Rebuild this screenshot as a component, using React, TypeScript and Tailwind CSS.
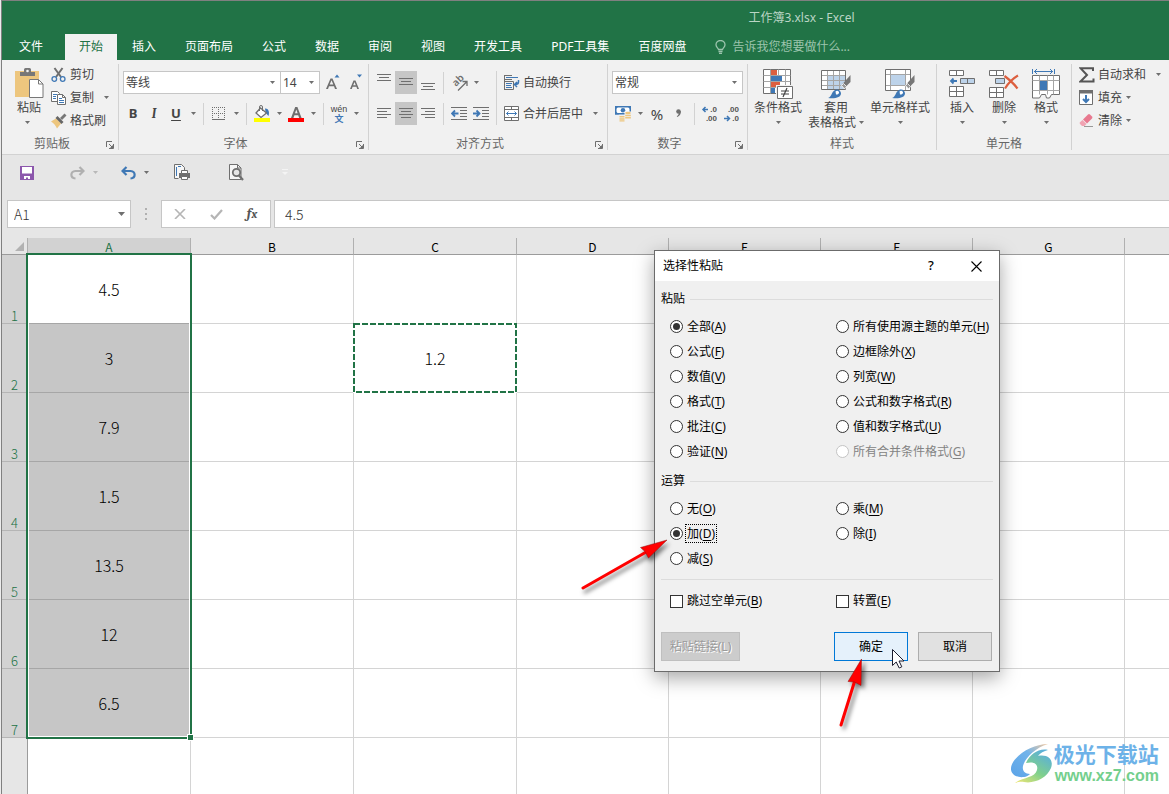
import type { ReactNode } from "react";

const GRAY = "#6f6f6f";
const BLUE = "#3f78b5";
const LIGHT = "#bdd3ea";
const TAN = "#edc67e";

function Icon({ w = 16, h = 16, children }: { w?: number; h?: number; children: ReactNode }) {
  return (
    <svg width={w} height={h} viewBox={`0 0 ${w} ${h}`} fill="none" className="shrink-0" aria-hidden="true">
      {children}
    </svg>
  );
}

function Caret({ color = GRAY }: { color?: string }) {
  return (
    <Icon w={5} h={3}>
      <path d="M0 0H5L2.5 3Z" fill={color} />
    </Icon>
  );
}

function CaretButton({ label, color }: { label: string; color?: string }) {
  return (
    <button aria-label={label} className="flex w-3 items-center justify-center self-stretch">
      <Caret color={color} />
    </button>
  );
}

function Tool({ label, active, wide, children }: { label: string; active?: boolean; wide?: boolean; children: ReactNode }) {
  return (
    <button
      aria-label={label}
      className={`flex h-[23px] shrink-0 items-center justify-center ${wide ? "w-[22px]" : "w-5"} ${active ? "bg-[#c6c6c6]" : ""}`}
    >
      {children}
    </button>
  );
}

function Separator() {
  return <span className="mx-1 h-[22px] w-px shrink-0 bg-[#d2d2d2]" />;
}

function Launcher({ label }: { label: string }) {
  return (
    <button aria-label={label} className="flex w-4 items-center justify-center pt-1">
      <Icon w={8} h={8}>
        <path d="M.5 6V.5H6" stroke={GRAY} />
        <path d="M3 3l3 3M7.500 3v4.500H3" stroke={GRAY} />
        <path d="M7 4v3H4z" fill={GRAY} />
      </Icon>
    </button>
  );
}

function Group({ title, width, launcher, children }: { title: string; width: string; launcher?: boolean; children: ReactNode }) {
  return (
    <section className={`flex h-[86px] shrink-0 flex-col border-r border-[#d2d2d2] ${width}`}>
      <div className="h-[72px]">{children}</div>
      <div className="flex h-[14px]">
        <h2 className="flex-1 text-center leading-4 text-[#666666]">{title}</h2>
        {launcher && <Launcher label={`${title}设置`} />}
      </div>
    </section>
  );
}

function SmallCommand({ icon, label, caret }: { icon: ReactNode; label: string; caret?: string }) {
  return (
    <button className="flex h-[21px] items-center">
      <span className="flex w-[19px] items-center">{icon}</span>
      {label}
      {caret && (
        <span className={caret}>
          <Caret />
        </span>
      )}
    </button>
  );
}

function LargeCommand({ icon, label, second, width }: { icon: ReactNode; label: string; second?: string; width: string }) {
  return (
    <button className={`flex flex-col items-center leading-[15px] whitespace-nowrap ${width}`}>
      <span className="flex h-[33px] items-center">{icon}</span>
      <span>{label}</span>
      <span className="flex h-[15px] items-center gap-[3px]">
        {second}
        <Caret />
      </span>
    </button>
  );
}

function Combo({ label, value, width }: { label: string; value: string; width: string }) {
  return (
    <span className={`flex h-[23px] items-center border border-[#c6c6c6] bg-white pr-[5px] pl-[2px] ${width}`}>
      <select aria-label={label} className="min-w-0 flex-1 appearance-none bg-transparent text-[#444444] outline-none">
        <option>{value}</option>
      </select>
      <Caret />
    </span>
  );
}

/* ---------- ribbon drawings ---------- */

const PasteIcon = () => (
  <Icon w={29} h={31}>
    <path d="M0 3h24v26H0z" fill={TAN} />
    <path d="M5 8V4h4V1.500A1.500 1.500 0 0 1 10.500 0h4A1.500 1.500 0 0 1 16 1.500V4h4v4z" fill="#777" />
    <circle cx="12.500" cy="3" r="1.300" fill="#f1f1f1" />
    <path d="M14 11h10l5 5v14H14z" fill="#f1f1f1" />
    <path d="M14.500 11.500h9l4.500 4.500v13.500H14.500z" fill="#fff" stroke="#777" />
    <path d="M23.500 11.500V16H28" stroke="#777" />
  </Icon>
);

const CutIcon = () => (
  <Icon>
    <path d="M3.500 1l6.500 9M11.500 1L5 10" stroke={GRAY} strokeWidth="2" />
    <circle cx="3.300" cy="12" r="2.300" stroke={BLUE} strokeWidth="1.300" />
    <circle cx="11.700" cy="12" r="2.300" stroke={BLUE} strokeWidth="1.300" />
  </Icon>
);

const CopyIcon = () => (
  <Icon>
    <path d="M.5 1.500h6l2 2v8h-8z" fill="#fff" stroke={GRAY} />
    <path d="M2 4.500h4M2 6.500h3M2 8.500h3" stroke={BLUE} />
    <path d="M6.500 4.500h5l3 3v7h-8z" fill="#fff" stroke={GRAY} />
    <path d="M8 8.500h3M8 10.500h5M8 12.500h5" stroke={BLUE} />
    <path d="M11.500 4.500v3h3" stroke={GRAY} />
  </Icon>
);

const BrushIcon = () => (
  <Icon>
    <path d="M0 8.500l5-3 5 5-4 5c-1-2.500-3-5-6-7z" fill={TAN} />
    <path d="M4.500 5l2-2 6 6-2 2z" fill="#666" />
    <path d="M9 5l4.500-4.500 2 2L11 7z" fill="#777" />
  </Icon>
);

const GrowFont = () => (
  <Icon w={18} h={18}>
    <path d="M0 15L4.500 4.500H6.500L11 15H9L8 12.200H3L2 15zM3.700 10.500h3.600L5.500 6.200z" fill={GRAY} />
    <path d="M8.500 3.500l2.500-3 2.500 3z" fill={BLUE} />
  </Icon>
);

const ShrinkFont = () => (
  <Icon w={16} h={18}>
    <path d="M2 15l3.500-8.500h2L11 15H9.200l-.8-2.200H4.600L3.800 15zM5.200 11.300h2.600L6.500 8z" fill={GRAY} />
    <path d="M9 .5h5l-2.500 3z" fill={BLUE} />
  </Icon>
);

const BordersIcon = () => (
  <Icon w={14} h={14}>
    <path d="M.5 0v12M6.500 0v12M12.500 0v12M0 .5h13M0 6.500h13" stroke={GRAY} strokeDasharray="1 1" />
    <path d="M0 12.500h13" stroke={GRAY} />
  </Icon>
);

const FillIcon = () => (
  <Icon w={17} h={18}>
    <path d="M11 3.500c3-.5 5 3 3.500 7.500-1.500-1-2-3-3-4z" fill={BLUE} />
    <path d="M6.500 3l6 5-5.500 4.500-5-4.500z" fill="#fff" stroke={GRAY} strokeWidth="1.300" />
    <path d="M5.500 6V2a1.500 1.500 0 0 1 3 0v4" stroke={GRAY} />
    <path d="M0 13h16v4H0z" fill="#ffff00" />
  </Icon>
);

const FontColorIcon = () => (
  <Icon w={17} h={18}>
    <path d="M3 13L7.200 2h2.200L13.600 13h-2.400l-1-2.800H6.400L5.400 13zM7 8.300h2.600L8.300 4.500z" fill={GRAY} />
    <path d="M0 13h16v4H0z" fill="#ff0000" />
  </Icon>
);

function LinesIcon({ rows }: { rows: [number, number, number][] }) {
  return (
    <Icon w={14} h={17}>
      {rows.map(([x, y, w]) => (
        <path key={y} d={`M${x} ${y}.5h${w}`} stroke={GRAY} />
      ))}
    </Icon>
  );
}

const OrientationIcon = () => (
  <svg width="20" height="20" viewBox="0 0 20 20" className="shrink-0" aria-hidden="true">
    <text x="0" y="0" transform="translate(7 14) rotate(-45)" fontSize="10" fontWeight="600" fill={GRAY}>
      ab
    </text>
    <path d="M9 17.500L17.500 9M13.500 8.500h4.500V13" fill="none" stroke={GRAY} strokeWidth="1.300" />
  </svg>
);

function IndentIcon({ flip }: { flip?: boolean }) {
  return (
    <Icon w={16} h={14}>
      <path d="M0 .5h16M9 3.500h7M9 6.500h7M9 9.500h7M0 12.500h16" stroke={GRAY} />
      <path d={flip ? "M0 6.500h6M3.500 3.500l3 3-3 3" : "M1.500 6.500h6M4 3.500l-3 3 3 3"} stroke={BLUE} strokeWidth="1.800" />
    </Icon>
  );
}

const WrapIcon = () => (
  <Icon>
    <path d="M.5 0v15M0 .5h8M0 4.500h8M.5 6.500h9v8H.5" stroke={GRAY} />
    <path d="M2 2.500h12" stroke={BLUE} />
    <path d="M2 8.500h6M2 10.500h5M2 12.500h6" stroke={BLUE} />
    <path d="M14.500 5v2c0 2-1 2.500-3.500 2.500M13 7l-2.500 2.500L13 12" stroke={BLUE} strokeWidth="1.500" />
  </Icon>
);

const MergeIcon = () => (
  <Icon>
    <path d="M.5.5h14v14H.5zM.5 3.500h14M.5 11.500h14M7.500.5v3M7.500 11.500v3" fill="#fff" stroke={GRAY} />
    <path d="M2.500 7.500h10M4.500 5.500l-2 2 2 2M10.500 5.500l2 2-2 2" stroke={BLUE} />
  </Icon>
);

const CurrencyIcon = () => (
  <Icon w={17} h={17}>
    <path d="M.75 1.750h14.500v7H.75z" fill="#fff" stroke={BLUE} strokeWidth="1.500" />
    <path d="M0 1h4L0 5zM16 1h-4l4 4zM0 9.500h4l-4-4z" fill={BLUE} />
    <circle cx="8" cy="5.250" r="2.300" fill={BLUE} />
    <path d="M9.500 6.500H17V16H9.500z" fill="#f1f1f1" />
    <ellipse cx="13" cy="8" rx="2.800" ry="1.300" fill={TAN} />
    <path d="M10.200 9.700h5.600v1.500h-5.600zM10.200 12h5.600v1.500h-5.600zM4.500 11h5v1.500h-5zM4.500 13.200h5v1.500h-5zM4.500 15.300h5v1.200h-5z" fill={TAN} />
  </Icon>
);

function DecimalIcon({ decrease }: { decrease?: boolean }) {
  return (
    <svg
      width="18"
      height="20"
      viewBox="0 0 18 20"
      fill="#555"
      fontSize="8"
      fontWeight="700"
      className="shrink-0 [font-family:'Liberation_Sans',sans-serif]"
      aria-hidden="true"
    >
      <text x="16" y="8" textAnchor="end">{decrease ? ".00" : ".0"}</text>
      <text x="16" y="17" textAnchor="end">{decrease ? ".0" : ".00"}</text>
      <path
        d={decrease ? "M1 14.500h5M4 12l2.500 2.500L4 17" : "M2 5.500h5M4.500 3L2 5.500 4.500 8"}
        fill="none"
        stroke={BLUE}
        strokeWidth="1.500"
      />
    </svg>
  );
}

const ConditionalIcon = () => (
  <Icon w={30} h={30}>
    <path d="M.5.5h27v24H.5z" fill="#fff" stroke={GRAY} />
    <path d="M7.500.5v24M15.500.5v24M22.500.5v24M.5 6.500h27M.5 12.500h27M.5 18.500h27" stroke="#a5a5a5" />
    <path d="M8 1h6v5H8zM8 13h9v5H8z" fill="#dc5f3f" />
    <path d="M8 7h11v5H8zM8 19h4v5H8z" fill={BLUE} />
    <path d="M13 16h17v14H13z" fill="#f1f1f1" />
    <path d="M14.500 17.500h15v12h-15z" fill="#fff" stroke={GRAY} />
    <path d="M18 22h8M18 25h8M24 19l-4 9" stroke="#444" strokeWidth="1.200" />
  </Icon>
);

const PaintBrush = () => (
  <>
    <path d="M29.500 6v7l-5 5-3-3z" fill="#777" />
    <path d="M20.500 16.500l2-2 3 3-2 2.500z" fill="#999" stroke="#fff" strokeWidth=".8" />
    <path d="M7 29c4-1 3-6 7-8 3-1.500 6 .5 6 3.500 0 4-6 5.500-13 4.500z" fill={BLUE} />
    <path d="M14.500 22.500c1.500-1.800 4-.5 3.500 1.500-.8 1.500-2 1.700-3 1.500z" fill="#fff" />
  </>
);

const TableFormatIcon = () => (
  <Icon w={30} h={30}>
    <path d="M.5 1.500h24v19H.5z" fill="#fff" />
    <path d="M6 6h18v15H6z" fill={LIGHT} />
    <path d="M6.500 1.500v19M12.500 1.500v19M18.500 1.500v19M.5 6.500h24M.5 11.500h24M.5 16.500h24" stroke="#a5a5a5" />
    <path d="M.5 1.500h24v19H.5z" stroke={GRAY} />
    <PaintBrush />
  </Icon>
);

const CellStyleIcon = () => (
  <Icon w={30} h={30}>
    <path d="M.5.5h25v21H.5z" fill="#fff" />
    <path d="M5.500.5v21M20.500.5v21M.5 5.500h25M.5 16.500h25" stroke="#a5a5a5" />
    <path d="M6 6h14v10H6z" fill={LIGHT} />
    <path d="M.5.5h25v21H.5z" stroke={GRAY} />
    <PaintBrush />
  </Icon>
);

const InsertIcon = () => (
  <Icon w={27} h={30}>
    <path d="M.5 1.500h14v5H.5zM7.500 1.500v5M.5 17.500h14v10H.5zM7.500 17.500v10M.5 22.500h14" fill="#fff" stroke={GRAY} />
    <path d="M11.500 9.500h14v5h-14zM18.500 9.500v5" fill={LIGHT} stroke={GRAY} />
    <path d="M2 12h6M4.500 9.500L2 12l2.500 2.500" stroke={BLUE} strokeWidth="1.800" />
  </Icon>
);

const DeleteIcon = () => (
  <Icon w={30} h={30}>
    <path d="M.5 1.500h14v5H.5zM7.500 1.500v5M.5 18.500h14v10H.5zM7.500 18.500v10M.5 23.500h14" fill="#fff" stroke={GRAY} />
    <path d="M6.500 9.500h9v5h-9z" fill={LIGHT} stroke={GRAY} />
    <path d="M15.500 7c4 3 9 7 13 12.500M29 6.500c-5 3-10 8-13 13" stroke="#dc5f3f" strokeWidth="2.200" />
  </Icon>
);

const FormatIcon = () => (
  <Icon w={28} h={32}>
    <path d="M.5 1v5M22.500 1v5M2 3.500h19M5 1L2.500 3.500 5 6M18 1l2.500 2.500L18 6" stroke={BLUE} />
    <path d="M.5 7.500h27v19h-8l-2 3.500h-3l-1-3.500h-4l-2 3.500h-7z" fill="#fff" stroke={GRAY} />
    <path d="M7.500 7.500v19M15.500 7.500v19M21.500 7.500v19M.5 12.500h27M.5 22.500h27" stroke="#a5a5a5" />
    <path d="M8 13h7v9H8z" fill={BLUE} />
  </Icon>
);

const SumIcon = () => (
  <Icon>
    <path d="M14 4V1.200H1.500L8 8l-6.500 6.500H14.500V11.500" stroke="#555" strokeWidth="2" />
  </Icon>
);

const FillDownIcon = () => (
  <Icon>
    <path d="M.5.5h13v14H.5z" fill="#fff" stroke={GRAY} />
    <path d="M0 0h14v3.500H0z" fill={GRAY} />
    <path d="M7 5v7M4 9l3 3 3-3" stroke={BLUE} strokeWidth="2" />
  </Icon>
);

const EraserIcon = () => (
  <Icon>
    <path d="M9 1.500a1.500 1.500 0 0 1 2 0l2 2a1.500 1.500 0 0 1 0 2L8 10.500 4 6.500z" fill="#e8798f" />
    <path d="M3.500 7l4 4-2 2H3L1 11c-.5-.7-.4-1.300 0-1.700z" fill="#f0a3b2" />
    <path d="M5 13.500h9" stroke="#999" />
  </Icon>
);

/* ---------- data ---------- */

const tabs = ["开始", "插入", "页面布局", "公式", "数据", "审阅", "视图", "开发工具", "PDF工具集", "百度网盘"];
const columns = ["A", "B", "C", "D", "E", "F", "G", ""];
const columnWidths = ["w-[163px]", "w-[163px]", "w-[163px]", "w-[152px]", "w-[152px]", "w-[152px]", "w-[152px]", ""];
const values = ["4.5", "3", "7.9", "1.5", "13.5", "12", "6.5", ""];

type Choice = { text: string; mnemonic: string; checked?: boolean; disabled?: boolean; focused?: boolean };

const pasteChoices: Choice[] = [
  { text: "全部", mnemonic: "A", checked: true },
  { text: "所有使用源主题的单元", mnemonic: "H" },
  { text: "公式", mnemonic: "F" },
  { text: "边框除外", mnemonic: "X" },
  { text: "数值", mnemonic: "V" },
  { text: "列宽", mnemonic: "W" },
  { text: "格式", mnemonic: "T" },
  { text: "公式和数字格式", mnemonic: "R" },
  { text: "批注", mnemonic: "C" },
  { text: "值和数字格式", mnemonic: "U" },
  { text: "验证", mnemonic: "N" },
  { text: "所有合并条件格式", mnemonic: "G", disabled: true },
];

const operationChoices: Choice[] = [
  { text: "无", mnemonic: "O" },
  { text: "乘", mnemonic: "M" },
  { text: "加", mnemonic: "D", checked: true, focused: true },
  { text: "除", mnemonic: "I" },
  { text: "减", mnemonic: "S" },
];

/* ---------- window parts ---------- */

function TitleBar() {
  return (
    <header className="border-t border-[#808080] bg-[#217346] text-white">
      <div className="flex h-[33px] items-center justify-center pl-[432px] text-[#bad5c5]">工作簿3.xlsx - Excel</div>
      <nav className="flex h-[26px] gap-px whitespace-nowrap">
        <button className="w-[62px] shrink-0 pr-1">文件</button>
        {tabs.map((tab, i) => (
          <button key={tab} className={`shrink-0 px-[14px] ${i === 0 ? "bg-[#f1f1f1] text-[#217346]" : ""}`}>
            {tab}
          </button>
        ))}
        <label className="flex flex-1 items-center gap-[6px] pl-[14px]">
          <Icon w={11} h={14}>
            <path d="M3.500 9.500C3 8 1 7 1 4.750a4.500 4.250 0 0 1 9 0C10 7 8 8 7.500 9.500zM3.500 11.500h4M4 13.300h3" stroke="#9cc4ad" strokeWidth="1.300" />
          </Icon>
          <input
            aria-label="告诉我您想要做什么"
            placeholder="告诉我您想要做什么..."
            className="min-w-0 flex-1 bg-transparent outline-none placeholder:text-[#9cc4ad]"
          />
        </label>
      </nav>
    </header>
  );
}

function Ribbon() {
  return (
    <div className="flex h-[95px] overflow-hidden border-b border-[#d2d2d2] bg-[#f1f1f1] pt-1 whitespace-nowrap text-[#444444]">
      <Group title="剪贴板" width="w-[117px]" launcher>
        <div className="flex gap-2 pl-[13px]">
          <button className="flex w-7 flex-col gap-px pt-[4px] leading-[15px]">
            <PasteIcon />
            <span>粘贴</span>
            <span className="flex h-3 w-6 items-center justify-center">
              <Caret />
            </span>
          </button>
          <div className="flex flex-col items-start gap-[2px]">
            <SmallCommand icon={<CutIcon />} label="剪切" />
            <SmallCommand icon={<CopyIcon />} label="复制" caret="ml-[10px]" />
            <SmallCommand icon={<BrushIcon />} label="格式刷" />
          </div>
        </div>
      </Group>

      <Group title="字体" width="w-[250px]" launcher>
        <div className="flex flex-col gap-2 pt-[7px] pl-1">
          <div className="flex">
            <Combo label="字体" value="等线" width="w-[158px]" />
            <Combo label="字号" value="14" width="-ml-px w-[40px]" />
            <div className="flex pl-1">
              <Tool label="增大字号" wide><GrowFont /></Tool>
              <Tool label="减小字号"><ShrinkFont /></Tool>
            </div>
          </div>
          <div className="flex items-center">
            <Tool label="加粗"><b className="text-[13px]">B</b></Tool>
            <Tool label="倾斜" wide><i className="font-serif text-[13px] font-bold">I</i></Tool>
            <Tool label="下划线" wide><b className="text-[13px] underline underline-offset-2">U</b></Tool>
            <CaretButton label="下划线选项" />
            <Separator />
            <Tool label="边框" wide><BordersIcon /></Tool>
            <CaretButton label="边框选项" />
            <Separator />
            <Tool label="填充颜色" wide><FillIcon /></Tool>
            <CaretButton label="填充颜色选项" />
            <Tool label="字体颜色" wide><FontColorIcon /></Tool>
            <CaretButton label="字体颜色选项" />
            <Separator />
            <Tool label="拼音" wide>
              <span className="flex flex-col items-center text-[9px] leading-[10px] [font-family:'Liberation_Sans','Noto_Sans_CJK_SC',sans-serif]">
                wén
                <span className="font-bold text-[#3f78b5]">文</span>
              </span>
            </Tool>
            <CaretButton label="拼音选项" />
          </div>
        </div>
      </Group>

      <Group title="对齐方式" width="w-[239px]" launcher>
        <div className="flex items-start pt-[7px] pl-1">
          <div className="flex flex-col gap-2">
            <div className="flex items-center">
              <Tool label="顶端对齐" wide><LinesIcon rows={[[0, 0, 14], [2, 3, 10], [0, 6, 14]]} /></Tool>
              <Tool label="垂直居中" wide active><LinesIcon rows={[[0, 4, 14], [2, 7, 10], [0, 10, 14]]} /></Tool>
              <Tool label="底端对齐" wide><LinesIcon rows={[[0, 9, 14], [2, 12, 10], [0, 15, 14]]} /></Tool>
              <Separator />
              <Tool label="方向" wide><OrientationIcon /></Tool>
              <CaretButton label="方向选项" />
            </div>
            <div className="flex items-center">
              <Tool label="左对齐" wide><LinesIcon rows={[[0, 3, 14], [0, 6, 10], [0, 9, 14], [0, 12, 10]]} /></Tool>
              <Tool label="居中" wide active><LinesIcon rows={[[0, 3, 14], [2, 6, 10], [0, 9, 14], [2, 12, 10]]} /></Tool>
              <Tool label="右对齐" wide><LinesIcon rows={[[0, 3, 14], [4, 6, 10], [0, 9, 14], [4, 12, 10]]} /></Tool>
              <Separator />
              <Tool label="减少缩进量" wide><IndentIcon /></Tool>
              <Tool label="增加缩进量" wide><IndentIcon flip /></Tool>
            </div>
          </div>
          <span className="mx-1 h-[54px] w-px bg-[#d2d2d2]" />
          <div className="flex flex-col items-start gap-[10px] pt-px pl-[3px]">
            <SmallCommand icon={<WrapIcon />} label="自动换行" />
            <SmallCommand icon={<MergeIcon />} label="合并后居中" caret="ml-[10px]" />
          </div>
        </div>
      </Group>

      <Group title="数字" width="w-[140px]" launcher>
        <div className="flex flex-col gap-2 pt-[7px] pl-1">
          <Combo label="数字格式" value="常规" width="w-[131px]" />
          <div className="flex items-center">
            <Tool label="会计数字格式" wide><CurrencyIcon /></Tool>
            <CaretButton label="会计数字格式选项" />
            <Tool label="百分比样式" wide><span className="text-[15px]">%</span></Tool>
            <Tool label="千位分隔样式" wide>
              <Icon w={8} h={12}>
                <circle cx="3.500" cy="3.500" r="2.300" fill={GRAY} />
                <path d="M5.800 3c.3 3-1 5-3.500 6l-.5-.8C3.300 7.500 4 6 3.800 4z" fill={GRAY} />
              </Icon>
            </Tool>
            <Separator />
            <Tool label="增加小数位数" wide><DecimalIcon /></Tool>
            <Tool label="减少小数位数" wide><DecimalIcon decrease /></Tool>
          </div>
        </div>
      </Group>

      <Group title="样式" width="w-[189px]">
        <div className="flex gap-px pt-[3px] pl-[3px]">
          <LargeCommand icon={<ConditionalIcon />} label="条件格式" width="w-[54px]" />
          <LargeCommand icon={<TableFormatIcon />} label="套用" second="表格格式" width="w-[60px]" />
          <LargeCommand icon={<CellStyleIcon />} label="单元格样式" width="w-[66px]" />
        </div>
      </Group>

      <Group title="单元格" width="w-[135px]">
        <div className="flex pt-[3px] pl-1">
          <LargeCommand icon={<InsertIcon />} label="插入" width="w-[42px]" />
          <LargeCommand icon={<DeleteIcon />} label="删除" width="w-[42px]" />
          <LargeCommand icon={<FormatIcon />} label="格式" width="w-[42px]" />
        </div>
      </Group>

      <section className="flex flex-col items-start gap-[2px] pl-[7px]">
        <SmallCommand icon={<SumIcon />} label="自动求和" caret="ml-[10px]" />
        <SmallCommand icon={<FillDownIcon />} label="填充" caret="ml-1" />
        <SmallCommand icon={<EraserIcon />} label="清除" caret="ml-1" />
      </section>
    </div>
  );
}

function QuickAccess() {
  return (
    <div className="flex h-[35px] items-center pl-[17px]">
      <button aria-label="保存" className="flex w-4 justify-center">
        <Icon w={14} h={14}>
          <path d="M0 0h14v14H0z" fill="#8c57ac" />
          <path d="M2 1h10v6.500H2zM4 10h6v3H8v-1.500H6V13H4z" fill="#fff" />
        </Icon>
      </button>
      <button aria-label="恢复" className="ml-[34px] flex w-4 justify-center">
        <Icon w={15} h={14}>
          <path d="M13 5H5.500C0 5.500 0 12 5.500 12.500M9.500 1l4 4-4 4" stroke="#b0b0b0" strokeWidth="2.200" />
        </Icon>
      </button>
      <span className="ml-1"><CaretButton label="恢复选项" color="#b8b8b8" /></span>
      <button aria-label="撤消" className="ml-[19px] flex w-4 justify-center">
        <Icon w={15} h={14}>
          <path d="M2 5h7.500c5.500.5 5.500 7 0 7.500M5.500 1l-4 4 4 4" stroke={BLUE} strokeWidth="2.200" />
        </Icon>
      </button>
      <span className="ml-1"><CaretButton label="撤消选项" /></span>
      <button aria-label="快速打印" className="ml-[22px] flex w-4 justify-center">
        <Icon w={16} h={17}>
          <path d="M4.500 14.500h-4V.5h7l3 3V6" fill="#f6f6f6" stroke={GRAY} />
          <path d="M2.500 3v9M4 2.500h3" stroke={BLUE} />
          <path d="M5 9h11v5H5z" fill={GRAY} />
          <path d="M7.500 6.500h6v3h-6zM7.500 12.500h6v3h-6z" fill="#fff" stroke={GRAY} />
        </Icon>
      </button>
      <button aria-label="打印预览" className="ml-[38px] flex w-4 justify-center">
        <Icon w={15} h={17}>
          <path d="M.5.5h8l3.500 3.500v11.500H.5z" fill="#f6f6f6" stroke={GRAY} />
          <path d="M8.500.5V4H12" stroke={GRAY} />
          <circle cx="7.500" cy="8.500" r="3.700" fill="#e6e6e6" stroke={GRAY} strokeWidth="1.800" />
          <path d="M10 11.500l4 4.500" stroke={GRAY} strokeWidth="2.200" />
        </Icon>
      </button>
      <button aria-label="自定义快速访问工具栏" className="ml-[38px]">
        <Icon w={6} h={7}>
          <path d="M0 .5h6" stroke="#f4f4f4" />
          <path d="M0 3h6L3 6z" fill="#f4f4f4" />
        </Icon>
      </button>
    </div>
  );
}

function FormulaBar() {
  return (
    <div className="mt-[10px] flex h-7 pl-[5px] text-sm font-light text-[#333333]">
      <div className="flex w-[124px] shrink-0 items-center border border-[#c6c6c6] bg-white pr-[5px] pl-[6px]">
        <input aria-label="名称框" defaultValue="A1" className="min-w-0 flex-1 outline-none [font-family:'Noto_Sans_CJK_SC',sans-serif]" />
        <Icon w={7} h={4}>
          <path d="M0 0h7L3.500 4z" fill={GRAY} />
        </Icon>
      </div>
      <span className="flex w-[30px] shrink-0 items-center justify-center">
        <Icon w={2} h={12}>
          <path d="M0 0h2v2H0zM0 5h2v2H0zM0 10h2v2H0z" fill="#b0b0b0" />
        </Icon>
      </span>
      <div className="flex w-[110px] shrink-0 border border-[#c6c6c6] bg-white">
        <button aria-label="取消" className="flex flex-1 items-center justify-center">
          <Icon w={12} h={10}><path d="M1 0l10 10M11 0L1 10" stroke="#b5b5b5" strokeWidth="1.600" /></Icon>
        </button>
        <button aria-label="输入" className="flex flex-1 items-center justify-center">
          <Icon w={13} h={11}><path d="M1 6l3.500 3.500L12 1" stroke="#b5b5b5" strokeWidth="2.200" /></Icon>
        </button>
        <button aria-label="插入函数" className="flex-1 font-serif text-sm font-bold text-[#555555] italic">
          f<span className="text-xs">x</span>
        </button>
      </div>
      <input
        aria-label="编辑栏"
        defaultValue="4.5"
        className="ml-[3px] min-w-0 flex-1 border border-r-0 border-[#c6c6c6] bg-white pl-[10px] outline-none [font-family:'Noto_Sans_CJK_SC',sans-serif]"
      />
    </div>
  );
}

function Sheet() {
  return (
    <div className="relative mt-[10px] min-h-0 flex-1 overflow-hidden [font-family:'Noto_Sans_CJK_SC',sans-serif]">
      <table className="w-full table-fixed border-separate border-spacing-0 bg-white">
        <colgroup>
          <col className="w-[26px]" />
          {columnWidths.map((w, i) => (
            <col key={i} className={w} />
          ))}
        </colgroup>
        <thead>
          <tr className="h-[17px]">
            <th className="border-r border-b border-r-[#b0b0b0] border-b-[#9b9b9b] bg-[#e6e6e6] p-0">
              <svg width="9" height="9" viewBox="0 0 9 9" className="mr-[3px] ml-auto" aria-hidden="true">
                <path d="M9 0v9H0z" fill="#b2b2b2" />
              </svg>
            </th>
            {columns.map((c, i) => (
              <th
                key={i}
                className={`border-r border-b border-r-[#b0b0b0] border-b-[#9b9b9b] p-0 align-bottom text-xs leading-[14px] font-normal last:border-r-0 ${i === 0 ? "bg-[#d2d2d2] text-[#217346]" : "bg-[#e6e6e6] text-black"}`}
              >
                {c}
              </th>
            ))}
          </tr>
        </thead>
        <tbody>
          {values.map((v, r) => (
            <tr key={r} className="h-[69px]">
              <th
                className={`border-r border-b border-r-[#9b9b9b] border-b-[#b5b5b5] p-0 text-center align-bottom text-[13px] leading-[14px] font-light ${r < 7 ? "bg-[#d2d2d2] text-[#217346]" : "bg-[#e6e6e6]"}`}
              >
                {r < 7 ? r + 1 : ""}
              </th>
              {columns.map((_, c) => (
                <td
                  key={c}
                  className={`border-r border-b border-r-[#d4d4d4] p-0 text-center align-middle text-base font-light text-black last:border-r-0 ${c === 0 && r > 0 && r < 7 ? "bg-[#c6c6c6]" : ""} ${c === 0 && r < 7 ? "border-b-[#a6a6a6]" : "border-b-[#d4d4d4]"}`}
                >
                  {c === 0 ? v : c === 2 && r === 1 ? "1.2" : ""}
                </td>
              ))}
            </tr>
          ))}
        </tbody>
      </table>
      <div className="absolute top-[15px] left-[24px] h-[486px] w-[166px] border-2 border-[#217346]">
        <div className="h-full border border-white" />
        <span className="absolute -right-[4px] -bottom-[4px] size-[7px] border border-white bg-[#217346]" />
      </div>
      <svg className="absolute top-[85px] left-[351px]" width="164" height="70" viewBox="0 0 164 70" fill="none" aria-hidden="true">
        <rect x="1" y="1" width="162" height="68" stroke="#fff" strokeWidth="2" />
        <rect x="1" y="1" width="162" height="68" stroke="#217346" strokeWidth="2" strokeDasharray="6 2" />
      </svg>
    </div>
  );
}

function RadioChoice({ group, choice }: { group: string; choice: Choice }) {
  return (
    <label className={`flex h-[25px] items-center gap-[3px] whitespace-nowrap ${choice.disabled ? "text-[#838383]" : ""}`}>
      <input
        type="radio"
        name={group}
        defaultChecked={choice.checked}
        disabled={choice.disabled}
        className="grid size-[13px] shrink-0 appearance-none place-items-center rounded-full border border-[#333333] bg-white before:size-[7px] before:rounded-full checked:before:bg-[#333333] disabled:border-[#c4c4c4]"
      />
      <span className={`px-px leading-[17px] ${choice.focused ? "outline-1 outline-black outline-dotted" : ""}`}>
        {choice.text}(<u className="underline-offset-2">{choice.mnemonic}</u>)
      </span>
    </label>
  );
}

function CheckChoice({ text, mnemonic }: { text: string; mnemonic: string }) {
  return (
    <label className="flex items-center gap-1 whitespace-nowrap">
      <input type="checkbox" className="size-[13px] shrink-0 appearance-none border border-[#333333] bg-white" />
      <span>
        {text}(<u className="underline-offset-2">{mnemonic}</u>)
      </span>
    </label>
  );
}

function SectionTitle({ children }: { children: ReactNode }) {
  return (
    <legend className="flex h-5 w-full items-center gap-[5px]">
      {children}
      <span className="h-px flex-1 bg-[#dcdcdc]" />
    </legend>
  );
}

function PasteSpecialDialog() {
  return (
    <div
      role="dialog"
      aria-label="选择性粘贴"
      className="absolute top-[250px] left-[654px] w-[346px] border border-[#6b6b6b] bg-[#f0f0f0] text-black shadow-[0_6px_18px_rgba(0,0,0,0.35)]"
    >
      <div className="flex h-[30px] items-center bg-white pr-[15px] pl-2">
        <h1 className="flex-1">选择性粘贴</h1>
        <button aria-label="帮助" className="w-[30px] text-[13px] font-medium">?</button>
        <button aria-label="关闭" className="ml-[22px] flex w-4 justify-center">
          <Icon w={11} h={11}><path d="M.5.5l10 10M10.500.5l-10 10" stroke="#000" strokeWidth="1.100" /></Icon>
        </button>
      </div>
      <form className="px-[6px] pt-2 pb-[10px]">
        <fieldset>
          <SectionTitle>粘贴</SectionTitle>
          <div className="grid grid-cols-[166px_1fr] pt-[5px] pl-[9px]">
            {pasteChoices.map((c) => (
              <RadioChoice key={c.mnemonic} group="paste" choice={c} />
            ))}
          </div>
        </fieldset>
        <fieldset className="mt-[7px]">
          <SectionTitle>运算</SectionTitle>
          <div className="grid grid-cols-[166px_1fr] pt-[5px] pl-[9px]">
            {operationChoices.map((c) => (
              <RadioChoice key={c.mnemonic} group="operation" choice={c} />
            ))}
          </div>
        </fieldset>
        <hr className="mt-2 border-[#dcdcdc]" />
        <div className="mt-3 grid grid-cols-[166px_1fr] pl-[9px] leading-[18px]">
          <CheckChoice text="跳过空单元" mnemonic="B" />
          <CheckChoice text="转置" mnemonic="E" />
        </div>
        <div className="mt-[22px] flex h-[29px] gap-[10px] pr-px">
          <button type="button" disabled className="mr-auto w-[79px] border border-[#bfbfbf] bg-[#cccccc] text-[#9a9a9a] [text-shadow:1px_1px_0_#ffffff]">
            粘贴链接(L)
          </button>
          <button type="button" className="w-[74px] border border-[#0078d7] bg-[#e5f1fb]">确定</button>
          <button type="button" className="w-[74px] border border-[#adadad] bg-[#e1e1e1]">取消</button>
        </div>
      </form>
    </div>
  );
}

function Annotations() {
  return (
    <>
      <svg className="pointer-events-none absolute top-[530px] left-[575px] drop-shadow-[2px_4px_2px_rgba(0,0,0,0.5)]" width="100" height="70" viewBox="575 530 100 70" aria-hidden="true">
        <path d="M583 588L648 551" stroke="#f00" strokeWidth="3" strokeLinecap="round" />
        <path d="M667 540L640.500 547.500 645 551.500 648.500 558z" fill="#f00" stroke="#8a1010" strokeWidth=".5" />
      </svg>
      <svg className="pointer-events-none absolute top-[645px] left-[830px] drop-shadow-[3px_3px_2px_rgba(0,0,0,0.5)]" width="50" height="90" viewBox="830 645 50 90" aria-hidden="true">
        <path d="M841 725L855 680" stroke="#f00" strokeWidth="3" strokeLinecap="round" />
        <path d="M861.500 659L848 681.500 854.500 682 861 685.500z" fill="#f00" stroke="#8a1010" strokeWidth=".5" />
      </svg>
      <svg className="pointer-events-none absolute top-[648px] left-[891px]" width="14" height="22" viewBox="0 0 14 22" aria-hidden="true">
        <path d="M1.500 1.500v16l3.700-3.500 3 6 2.600-1.200-2.800-5.800h5z" fill="#fff" stroke="#1c1c2e" />
      </svg>
    </>
  );
}

function SiteMark() {
  return (
    <div className="absolute right-[10px] bottom-[6px] flex items-center gap-px">
      <svg width="42" height="42" viewBox="0 0 42 42" aria-hidden="true">
        <defs>
          <linearGradient id="mark-blue" x1="0" y1="1" x2="1" y2="0">
            <stop offset="0" stopColor="#5ba3e8" />
            <stop offset=".6" stopColor="#72b4ea" />
            <stop offset="1" stopColor="#f4c9a0" />
          </linearGradient>
          <linearGradient id="mark-green" x1="0" y1="1" x2=".7" y2="0">
            <stop offset="0" stopColor="#f3e774" />
            <stop offset=".5" stopColor="#7fd08c" />
            <stop offset="1" stopColor="#5cb0d8" />
          </linearGradient>
        </defs>
        <path d="M37 0C20 0 1 13 0 24c-.5 6 5 10 13 9 2 0 5-1.500 6-3-5 0-8-3-7-8C14 14 24 4 37 0z" fill="url(#mark-blue)" />
        <path d="M15 19C19 10 28 4 37 6c-4 1-8 3-10 6 10-2 16 4 13 12-4 10-17 16-27 14-4-.5-7 .5-9 1 8-6 20-5 22-13 1.500-6-3-9-11-7z" fill="url(#mark-green)" />
      </svg>
      <div className="flex flex-col leading-[22px] whitespace-nowrap">
        <span className="text-[21px] font-bold text-[#6db2e8] [font-family:'Noto_Sans_CJK_SC',sans-serif]">极光下载站</span>
        <a href="#home" className="pl-px text-base font-bold text-[#74cf8d] [font-family:'Liberation_Sans',sans-serif]">www.xz7.com</a>
      </div>
    </div>
  );
}

export default function App() {
  return (
    <div className="relative h-screen overflow-hidden bg-[#ececec] pl-px text-xs [font-family:'Noto_Sans','Noto_Sans_CJK_SC',sans-serif]">
      <div className="flex h-full flex-col border-l border-[#808080] bg-[#e6e6e6]">
        <TitleBar />
        <Ribbon />
        <QuickAccess />
        <FormulaBar />
        <Sheet />
      </div>
      <SiteMark />
      <PasteSpecialDialog />
      <Annotations />
    </div>
  );
}
